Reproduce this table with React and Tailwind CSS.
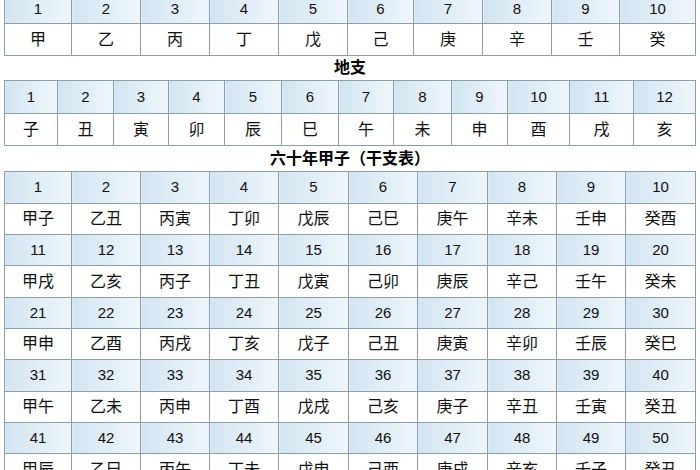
import React from "react";

const stems = ["甲", "乙", "丙", "丁", "戊", "己", "庚", "辛", "壬", "癸"];
const branches = ["子", "丑", "寅", "卯", "辰", "巳", "午", "未", "申", "酉", "戌", "亥"];

const sixty = [
  ["甲子", "乙丑", "丙寅", "丁卯", "戊辰", "己巳", "庚午", "辛未", "壬申", "癸酉"],
  ["甲戌", "乙亥", "丙子", "丁丑", "戊寅", "己卯", "庚辰", "辛己", "壬午", "癸未"],
  ["甲申", "乙酉", "丙戌", "丁亥", "戊子", "己丑", "庚寅", "辛卯", "壬辰", "癸巳"],
  ["甲午", "乙未", "丙申", "丁酉", "戊戌", "己亥", "庚子", "辛丑", "壬寅", "癸丑"],
  ["甲辰", "乙巳", "丙午", "丁未", "戊申", "己酉", "庚戌", "辛亥", "壬子", "癸丑"],
];

// column widths measured off the picture
const colsTop = ["w-[67px]", "w-[69px]", "w-[69px]", "w-[69px]", "w-[69px]", "w-[66px]", "w-[69px]", "w-[69px]", "w-[68px]", "w-[76px]"];
const colsBranch = ["w-[53px]", "w-[56px]", "w-[55px]", "w-[56px]", "w-[57px]", "w-[57px]", "w-[55px]", "w-[58px]", "w-[56px]", "w-[62px]", "w-[64px]", "w-[62px]"];
const colsSixty = ["w-[67px]", "w-[69px]", "w-[69px]", "w-[69px]", "w-[70px]", "w-[69px]", "w-[70px]", "w-[69px]", "w-[69px]", "w-[70px]"];
const sixtyHeights = ["h-[32px]", "h-[31px]", "h-[31px]", "h-[32px]", "h-[31px]", "h-[31px]", "h-[32px]", "h-[31px]", "h-[31px]", "h-[32px]"];

const numCell =
  "border border-[#8d9fa9] bg-linear-to-r from-[#d3e5f2] to-[#eef6fb] text-center text-[15px] p-0";
const charCell = "border border-[#8d9fa9] bg-white text-center text-[16px] p-0";

function Grid({ cols, rows }) {
  return (
    <table className="table-fixed border-collapse w-[691px] ml-1">
      <colgroup>
        {cols.map((w, i) => (
          <col key={i} className={w} />
        ))}
      </colgroup>
      <tbody>
        {rows.map((row, r) => (
          <tr key={r} className={row.h}>
            {row.cells.map((c, i) => (
              <td key={i} className={row.num ? numCell : charCell}>
                {c}
              </td>
            ))}
          </tr>
        ))}
      </tbody>
    </table>
  );
}

export default function App() {
  const sixtyRows = [];
  sixty.forEach((names, r) => {
    sixtyRows.push({ num: true, h: sixtyHeights[r * 2], cells: names.map((_, i) => r * 10 + i + 1) });
    sixtyRows.push({ num: false, h: sixtyHeights[r * 2 + 1], cells: names });
  });

  return (
    <div className="w-[700px] h-[470px] overflow-hidden bg-white text-[#111] font-['Liberation_Sans','Noto_Sans_CJK_SC',sans-serif]">
      <div className="-mt-[6px]">
        <Grid
          cols={colsTop}
          rows={[
            { num: true, h: "h-[29px]", cells: stems.map((_, i) => i + 1) },
            { num: false, h: "h-[32px]", cells: stems },
          ]}
        />
      </div>
      <div className="flex h-[24px] items-center justify-center text-[16px] font-bold text-black">地支</div>
      <Grid
        cols={colsBranch}
        rows={[
          { num: true, h: "h-[33px]", cells: branches.map((_, i) => i + 1) },
          { num: false, h: "h-[32px]", cells: branches },
        ]}
      />
      <div className="flex h-[25px] items-center justify-center text-[16px] font-bold text-black">
        六十年甲子（干支表）
      </div>
      <Grid cols={colsSixty} rows={sixtyRows} />
    </div>
  );
}
